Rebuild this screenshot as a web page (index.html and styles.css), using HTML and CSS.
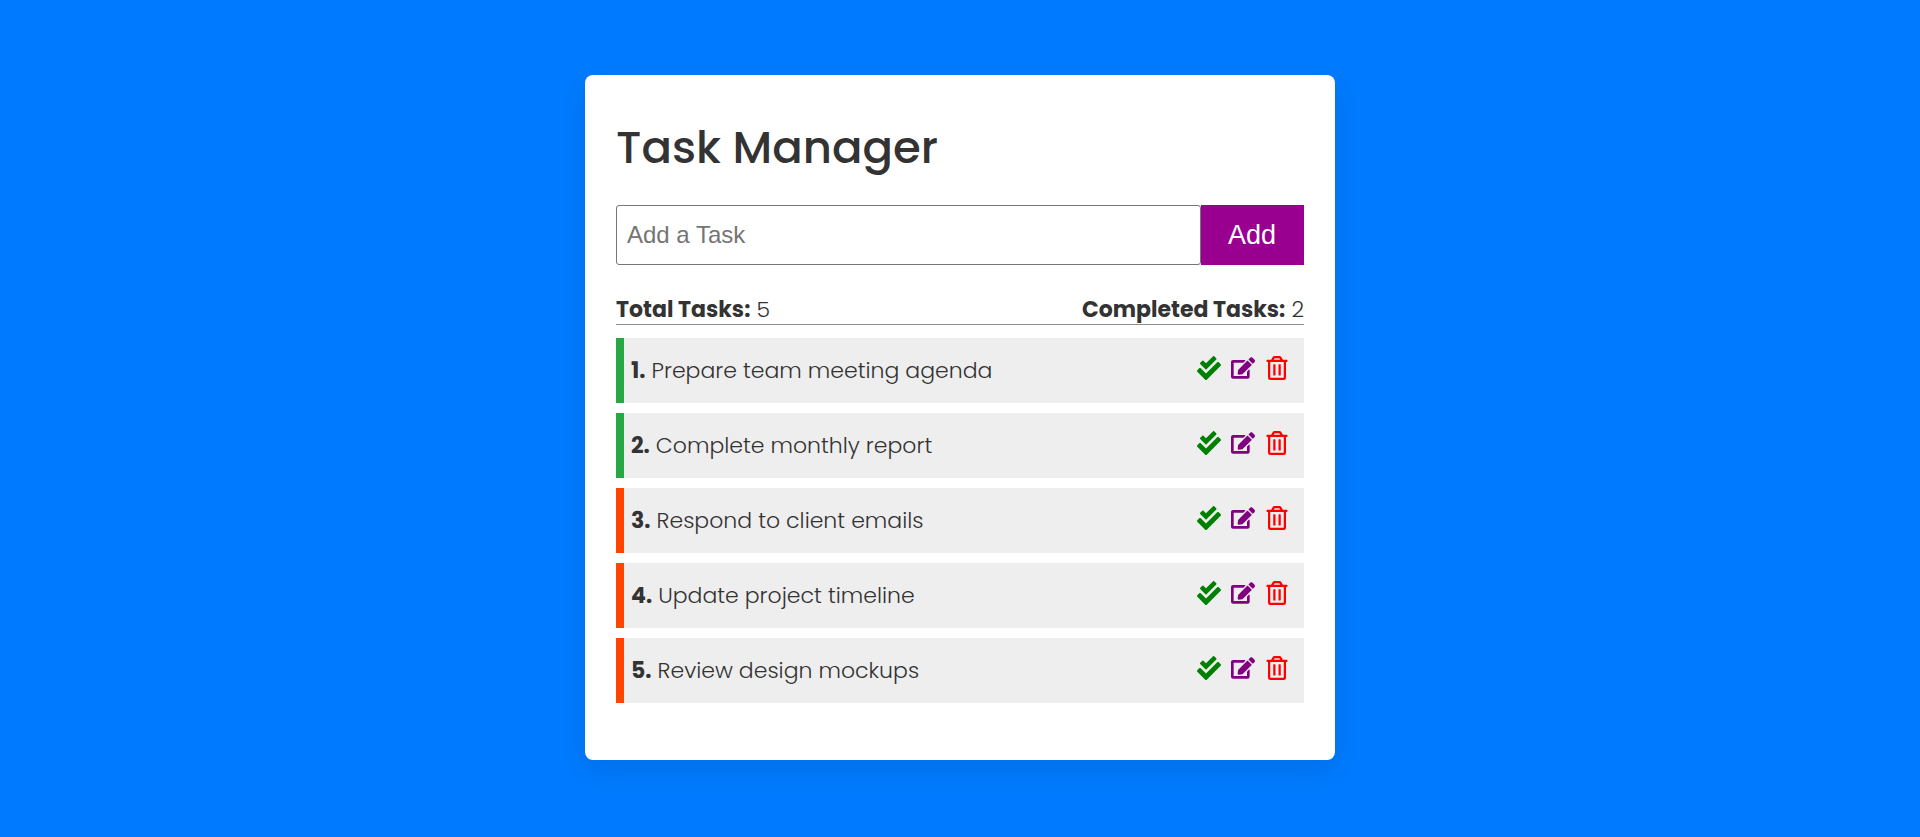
FILE: index.html
```html
<!DOCTYPE html>
<html lang="en">
<head>
<meta charset="utf-8">
<meta name="viewport" content="width=device-width, initial-scale=1">
<title>Task Manager</title>
<link rel="stylesheet" href="styles.css">
</head>
<body>
<svg class="sprite" aria-hidden="true">
  <symbol id="icon-check" viewBox="0 0 512 512"><path d="M505 174.800l-39.600-39.600c-9.400-9.400-24.600-9.400-33.900 0L192 374.700 80.600 263.200c-9.400-9.400-24.600-9.400-33.900 0L7 302.900c-9.400 9.400-9.400 24.600 0 34L175 505c9.400 9.400 24.600 9.400 33.900 0l296-296.200c9.400-9.500 9.400-24.700.1-34zm-324.300 106c6.200 6.300 16.400 6.300 22.600 0l208-208.200c6.200-6.300 6.200-16.400 0-22.600L366.100 4.700c-6.200-6.300-16.400-6.300-22.600 0L192 156.200l-55.400-55.500c-6.200-6.300-16.400-6.300-22.600 0L68.700 146c-6.200 6.300-6.200 16.400 0 22.600l112 112.200z"/></symbol>
  <symbol id="icon-edit" viewBox="0 0 576 512"><path d="M402.600 83.200l90.200 90.200c3.800 3.800 3.800 10 0 13.800L274.400 405.600l-92.800 10.300c-12.400 1.400-22.900-9.100-21.500-21.500l10.300-92.800L388.800 83.200c3.800-3.800 10-3.800 13.800 0zm162-22.900l-48.800-48.800c-15.200-15.200-39.900-15.200-55.200 0l-35.400 35.400c-3.800 3.800-3.800 10 0 13.800l90.200 90.200c3.800 3.800 10 3.800 13.800 0l35.400-35.400c15.200-15.300 15.200-40 0-55.200zM384 346.200V448H64V128h229.800c3.200 0 6.200-1.300 8.500-3.500l40-40c7.600-7.600 2.200-20.500-8.500-20.500H48C21.500 64 0 85.500 0 112v352c0 26.500 21.500 48 48 48h352c26.500 0 48-21.500 48-48V306.200c0-10.700-12.900-16-20.500-8.500l-40 40c-2.200 2.300-3.500 5.300-3.500 8.500z"/></symbol>
  <symbol id="icon-trash" viewBox="0 0 448 512"><path d="M268 416h24a12 12 0 0 0 12-12V188a12 12 0 0 0-12-12h-24a12 12 0 0 0-12 12v216a12 12 0 0 0 12 12zM432 80h-82.410l-34-56.700A48 48 0 0 0 274.410 0H173.590a48 48 0 0 0-41.160 23.300L98.410 80H16A16 16 0 0 0 0 96v16a16 16 0 0 0 16 16h16v336a48 48 0 0 0 48 48h288a48 48 0 0 0 48-48V128h16a16 16 0 0 0 16-16V96a16 16 0 0 0-16-16zM171.840 50.910A6 6 0 0 1 177 48h94a6 6 0 0 1 5.150 2.910L293.610 80H154.390zM368 464H80V128h288zm-212-48h24a12 12 0 0 0 12-12V188a12 12 0 0 0-12-12h-24a12 12 0 0 0-12 12v216a12 12 0 0 0 12 12z"/></symbol>
</svg>
<main class="card">
  <h1 class="title">Task Manager</h1>
  <form class="task-form">
    <input class="task-input" type="text" placeholder="Add a Task" aria-label="Add a Task">
    <button class="add-button" type="submit">Add</button>
  </form>
  <div class="summary">
    <p><strong>Total Tasks:</strong> 5</p>
    <p><strong>Completed Tasks:</strong> 2</p>
  </div>
  <ul class="tasks">
    <li class="task done">
      <p><strong>1.</strong> Prepare team meeting agenda</p>
      <div class="actions">
        <button class="action check" type="button" aria-label="Complete"><svg><use href="#icon-check"/></svg></button>
        <button class="action edit" type="button" aria-label="Edit"><svg><use href="#icon-edit"/></svg></button>
        <button class="action trash" type="button" aria-label="Delete"><svg><use href="#icon-trash"/></svg></button>
      </div>
    </li>
    <li class="task done">
      <p><strong>2.</strong> Complete monthly report</p>
      <div class="actions">
        <button class="action check" type="button" aria-label="Complete"><svg><use href="#icon-check"/></svg></button>
        <button class="action edit" type="button" aria-label="Edit"><svg><use href="#icon-edit"/></svg></button>
        <button class="action trash" type="button" aria-label="Delete"><svg><use href="#icon-trash"/></svg></button>
      </div>
    </li>
    <li class="task">
      <p><strong>3.</strong> Respond to client emails</p>
      <div class="actions">
        <button class="action check" type="button" aria-label="Complete"><svg><use href="#icon-check"/></svg></button>
        <button class="action edit" type="button" aria-label="Edit"><svg><use href="#icon-edit"/></svg></button>
        <button class="action trash" type="button" aria-label="Delete"><svg><use href="#icon-trash"/></svg></button>
      </div>
    </li>
    <li class="task">
      <p><strong>4.</strong> Update project timeline</p>
      <div class="actions">
        <button class="action check" type="button" aria-label="Complete"><svg><use href="#icon-check"/></svg></button>
        <button class="action edit" type="button" aria-label="Edit"><svg><use href="#icon-edit"/></svg></button>
        <button class="action trash" type="button" aria-label="Delete"><svg><use href="#icon-trash"/></svg></button>
      </div>
    </li>
    <li class="task">
      <p><strong>5.</strong> Review design mockups</p>
      <div class="actions">
        <button class="action check" type="button" aria-label="Complete"><svg><use href="#icon-check"/></svg></button>
        <button class="action edit" type="button" aria-label="Edit"><svg><use href="#icon-edit"/></svg></button>
        <button class="action trash" type="button" aria-label="Delete"><svg><use href="#icon-trash"/></svg></button>
      </div>
    </li>
  </ul>
</main>
</body>
</html>
```
FILE: styles.css
```css
* {
  box-sizing: border-box;
  margin: 0;
  padding: 0;
}

body {
  min-height: 100vh;
  display: flex;
  align-items: center;
  justify-content: center;
  padding-bottom: 2px;
  background: #007bff;
  color: #333;
  font-family: Poppins, Inter, sans-serif;
  font-size: 22px;
  font-weight: 300;
  line-height: 34px;
}

.sprite {
  display: none;
}

.card {
  width: 100%;
  max-width: 750px;
  padding: 40px 31px 57px;
  background: #fff;
  border-radius: 8px;
  box-shadow: 0 10px 30px rgba(0, 0, 0, 0.1);
}

.title {
  margin-bottom: 24px;
  font-size: 45px;
  font-weight: 500;
  line-height: 66px;
}

.task-form {
  display: flex;
  margin-bottom: 30px;
}

.task-input {
  flex: 1;
  min-width: 0;
  height: 60px;
  padding: 0 10px;
  border: 1px solid #767676;
  border-radius: 3px;
  font-family: "Liberation Sans", Arial, sans-serif;
  font-size: 24px;
}

.task-input::placeholder {
  color: #757575;
}

.add-button {
  padding: 0 28px 0 27px;
  border: 0;
  background: #990090;
  color: #fff;
  font-family: "Liberation Sans", Arial, sans-serif;
  font-size: 27px;
}

.summary {
  display: flex;
  justify-content: space-between;
  margin-bottom: 13px;
  border-bottom: 1px solid #8f8f8f;
  line-height: 29px;
}

strong {
  font-weight: 700;
}

.tasks {
  display: grid;
  gap: 10px;
  list-style: none;
}

.task {
  display: flex;
  align-items: center;
  justify-content: space-between;
  min-height: 65px;
  padding: 0 15px 0 7px;
  border-left: 8px solid orangered;
  background: #eee;
}

.task.done {
  border-left-color: #28a745;
}

.actions {
  display: flex;
  gap: 10px;
  padding-bottom: 6px;
}

.action {
  display: flex;
  border: 0;
  background: none;
}

.action svg {
  width: 24px;
  height: 24px;
  fill: currentColor;
}

.check {
  color: green;
}

.edit {
  color: purple;
}

.trash {
  color: red;
}
```
